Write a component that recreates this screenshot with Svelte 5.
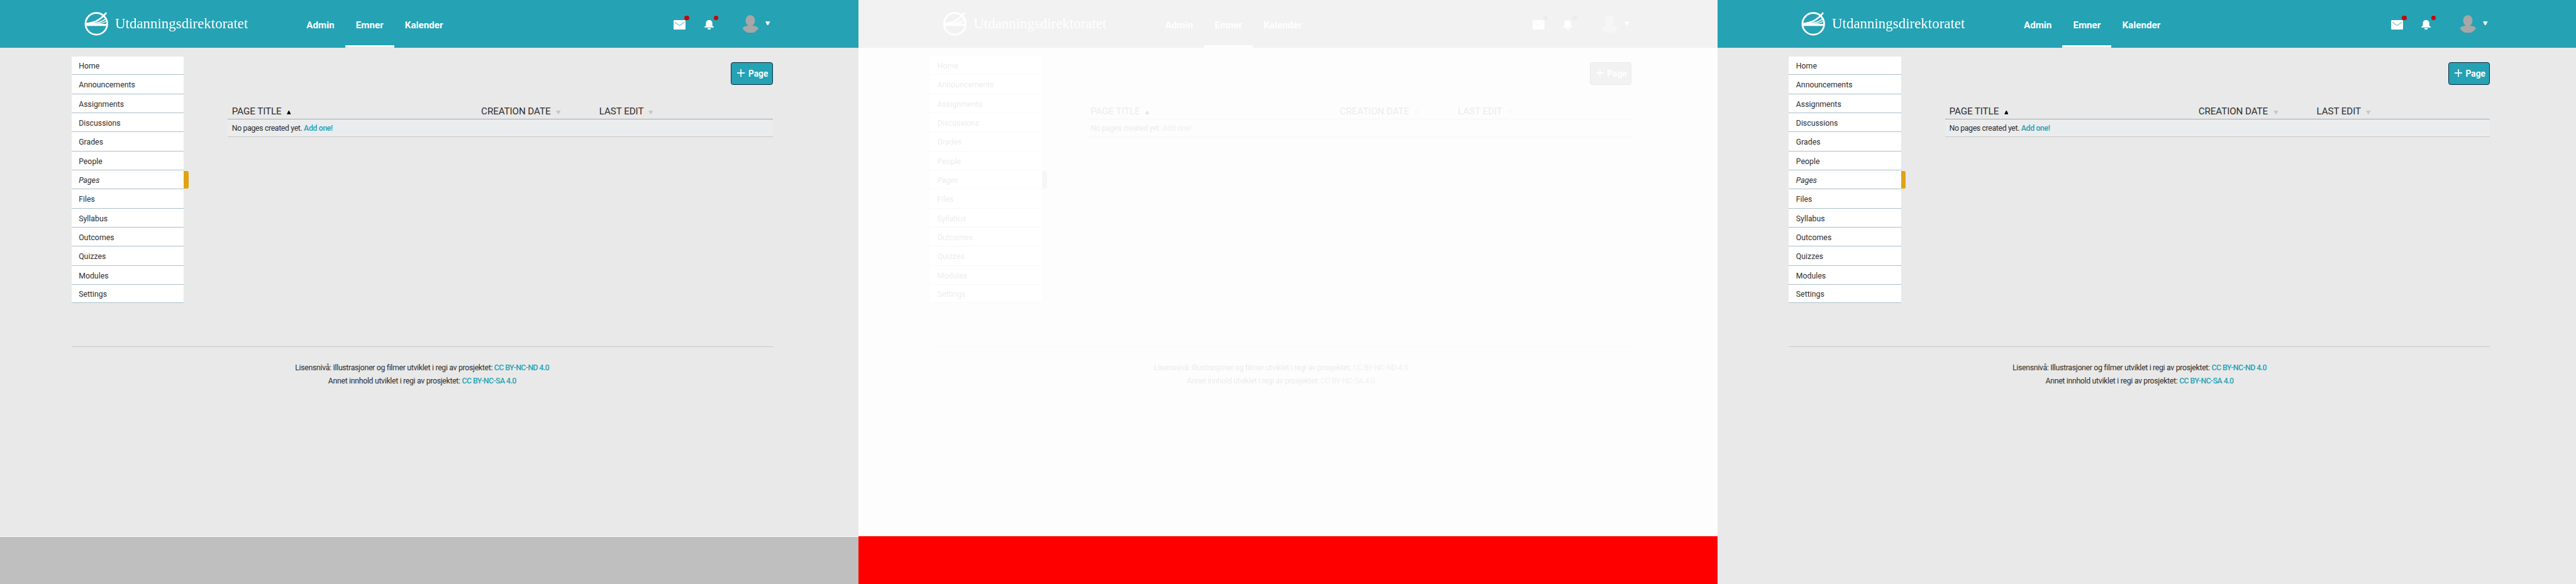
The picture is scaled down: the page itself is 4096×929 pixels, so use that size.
<script>
  const navItems = ['Home', 'Announcements', 'Assignments', 'Discussions', 'Grades', 'People', 'Pages', 'Files', 'Syllabus', 'Outcomes', 'Quizzes', 'Modules', 'Settings'];
  const panels = ['short', 'short faint', 'full'];
</script>

{#snippet screen()}
  <header>
    <div class="brand">
      <svg class="mark" width="40" height="42" viewBox="0 0 40 42" fill="none" stroke="#fff">
        <circle cx="20.300" cy="21" r="18.200" stroke-width="2.900" />
        <path d="M3 22.800H38" stroke-width="3.200" />
        <path d="M3 20.800C18 20 28 14 37 2.300" stroke-width="2.800" />
        <path d="M12 21C23 20 31 17.500 36.500 12M19 22C27 21 32 19.500 37.500 16.500" stroke-width="1.700" />
      </svg>
      <span class="wordmark">Utdanningsdirektoratet</span>
    </div>
    <nav class="top">
      <a href="#admin">Admin</a>
      <a href="#emner" class="current">Emner</a>
      <a href="#kalender">Kalender</a>
    </nav>
    <div class="tools">
      <div class="tool mail">
        <svg width="20" height="16" viewBox="0 0 20 16"><rect width="20" height="16" rx="1.500" fill="#fff" /><path d="M2 3.200L10 9.200L18.500 3.200" fill="none" stroke="#25a2b4" stroke-width="1" /></svg>
        <i class="dot"></i>
      </div>
      <div class="tool bell">
        <svg width="16" height="16" viewBox="0 0 16 16" fill="#fff"><path d="M8 0C4.500 0 2.600 2.200 2.600 5.400V8.500C2.600 9.800 2 10.400 0 11.200V12.300H16V11.200C14 10.400 13.400 9.800 13.400 8.500V5.400C13.400 2.200 11.500 0 8 0ZM5 13.500H11C10.800 15 9.800 16 8 16S5.200 15 5 13.500Z" /></svg>
        <i class="dot"></i>
      </div>
      <svg class="avatar" width="28" height="30" viewBox="0 0 28 30" fill="#a7a7a7"><ellipse cx="13.700" cy="9.300" rx="7.900" ry="9.300" /><path d="M.5 22C3 19 6.500 18.200 10.500 17.800L11 16H16.500L17 17.800C21 18.200 25 19 27.500 22C25 27 20 30 14 30S3 27 .5 22Z" /></svg>
      <svg class="caret" width="8" height="7" viewBox="0 0 8 7" fill="#fff"><path d="M0 0H8L5 6H3Z" /></svg>
    </div>
  </header>
  <div class="body">
    <ul class="side">
      {#each navItems as item}
        <li class:active={item === 'Pages'}>{item}</li>
      {/each}
    </ul>
    <main>
      <button><svg width="13" height="13" viewBox="0 0 13 13" stroke="#fff" stroke-width="1.800"><path d="M6.500 0V13M0 6.500H13" /></svg><span>Page</span></button>
      <div class="row head">
        <span>PAGE TITLE <svg width="7" height="6" viewBox="0 0 7 6" fill="#000"><path d="M0 6L3 0H4L7 6Z" /></svg></span>
        <span>CREATION DATE <svg width="8" height="6" viewBox="0 0 8 6" fill="#c7c7c7"><path d="M0 0H8L4.500 6H3.500Z" /></svg></span>
        <span>LAST EDIT <svg width="8" height="6" viewBox="0 0 8 6" fill="#c7c7c7"><path d="M0 0H8L4.500 6H3.500Z" /></svg></span>
      </div>
      <div class="row empty"><span>No pages created yet. <a href="#add">Add one!</a></span></div>
    </main>
  </div>
  <footer>
    <p>Lisensnivå: Illustrasjoner og filmer utviklet i regi av prosjektet: <a href="#nd">CC BY-NC-ND 4.0</a></p>
    <p>Annet innhold utviklet i regi av prosjektet: <a href="#sa">CC BY-NC-SA 4.0</a></p>
  </footer>
{/snippet}

<svg class="defs" width="0" height="0">
  <filter id="faint" x="0" y="0" width="100%" height="100%" color-interpolation-filters="sRGB">
    <feColorMatrix type="matrix" values=".0299 .0587 .0114 0 .9  .0299 .0587 .0114 0 .9  .0299 .0587 .0114 0 .9  0 0 0 1 0" />
  </filter>
</svg>
<div class="sheet">
  {#each panels as kind, i}
    <div class="col c{i}"><section class="page {kind}">{@render screen()}</section></div>
  {/each}
</div>

<style>
  :global(body) { margin: 0; overflow: hidden; background: #e9e9e9; }
  .defs { display: none; }
  .sheet { zoom: 0.948148; display: flex; width: 4320px; height: 980px; font: 13px/20px Roboto, sans-serif; color: #2d2d2d; }
  .col { width: 1440px; height: 980px; flex: none; overflow: hidden; }
  .c0 { background: #bfbfbf; }
  .c0 .page { border-bottom: 1px solid #fff; }
  .c1 { background: #f00; }
  .page { height: 900px; background: #e9e9e9; }
  .full { height: 980px; }
  .faint { filter: url(#faint); }
  a { color: #25a2b4; text-decoration: none; font-weight: 500; }
  header { box-sizing: border-box; height: 80px; background: #25a2b4; display: flex; padding-left: 141px; }
  .brand { width: 355px; display: flex; align-items: flex-start; padding-top: 19px; }
  .mark { flex: none; margin-right: 11.500px; overflow: visible; }
  .wordmark { font: 25px/42px "Liberation Serif", serif; color: #fff; transform: scaleX(.968); transform-origin: 0 50%; white-space: nowrap; }
  .top { display: flex; width: 629px; }
  .top a { box-sizing: border-box; height: 80px; padding: 0 18px; font-weight: 700; font-size: 16px; line-height: 85px; color: #fff; white-space: nowrap; }
  .top .current { background: linear-gradient(#fff, #fff) 0 100% / 100% 4px no-repeat; }
  .tools { display: flex; align-items: flex-start; }
  .tool { position: relative; height: 16px; margin-top: 34px; }
  .tool svg, .avatar, .caret { display: block; }
  .mail { width: 20px; margin-left: 5px; }
  .bell { width: 16px; margin-left: 31px; }
  .dot { position: absolute; width: 8px; height: 8px; border-radius: 50%; background: #c00; top: -8px; left: 18px; }
  .bell .dot { left: 16px; }
  .avatar { margin: 25px 0 0 48px; }
  .caret { margin: 36px 0 0 11px; }
  .body { display: flex; height: 501px; margin: 0 144px 0 120px; border-bottom: 1px solid #c7c7c7; }
  .side { list-style: none; margin: 15px 0 0; padding: 0; width: 188px; }
  .side li { position: relative; box-sizing: border-box; height: 32px; padding-left: 12px; line-height: 34px; font-size: 13px; background: #fff; border-bottom: 1px solid #a9bfc8; }
  .side li:first-child, .side li:last-child { height: 31px; line-height: 32px; }
  .side .active { font-style: italic; }
  .side .active::after { content: ""; position: absolute; left: 188px; top: 1px; width: 8px; height: 30px; background: #e0a313; border-radius: 0 3px 3px 0; }
  main { width: 914px; margin-left: 74px; padding-top: 24px; display: flex; flex-direction: column; }
  button { align-self: flex-end; box-sizing: border-box; width: 70px; height: 38px; border: 1px solid #062b3b; border-radius: 4px; background: #25a2b4; color: #fff; font: 700 14.500px/36px Roboto, sans-serif; display: flex; align-items: center; gap: 5.500px; padding: 0 0 0 9.500px; }
  button span { padding-top: 1px; }
  .row { display: grid; grid-template-columns: 418px 198px 1fr; padding-left: 7px; }
  .head { margin-top: 34px; height: 23px; font-size: 16px; line-height: 22px; letter-spacing: -.08px; border-bottom: 1px solid #a1acb5; }
  .head svg { margin-left: 5px; }
  .empty { height: 29px; line-height: 30px; background: #ebecee; border-bottom: 1px solid #c7c7c7; white-space: nowrap; letter-spacing: -.38px; }
  footer { padding-top: 24px; text-align: center; margin: 0 144px 0 120px; }
  footer p { margin: 0; line-height: 22.500px; letter-spacing: -.34px; }
  footer a { letter-spacing: -.6px; }
</style>
